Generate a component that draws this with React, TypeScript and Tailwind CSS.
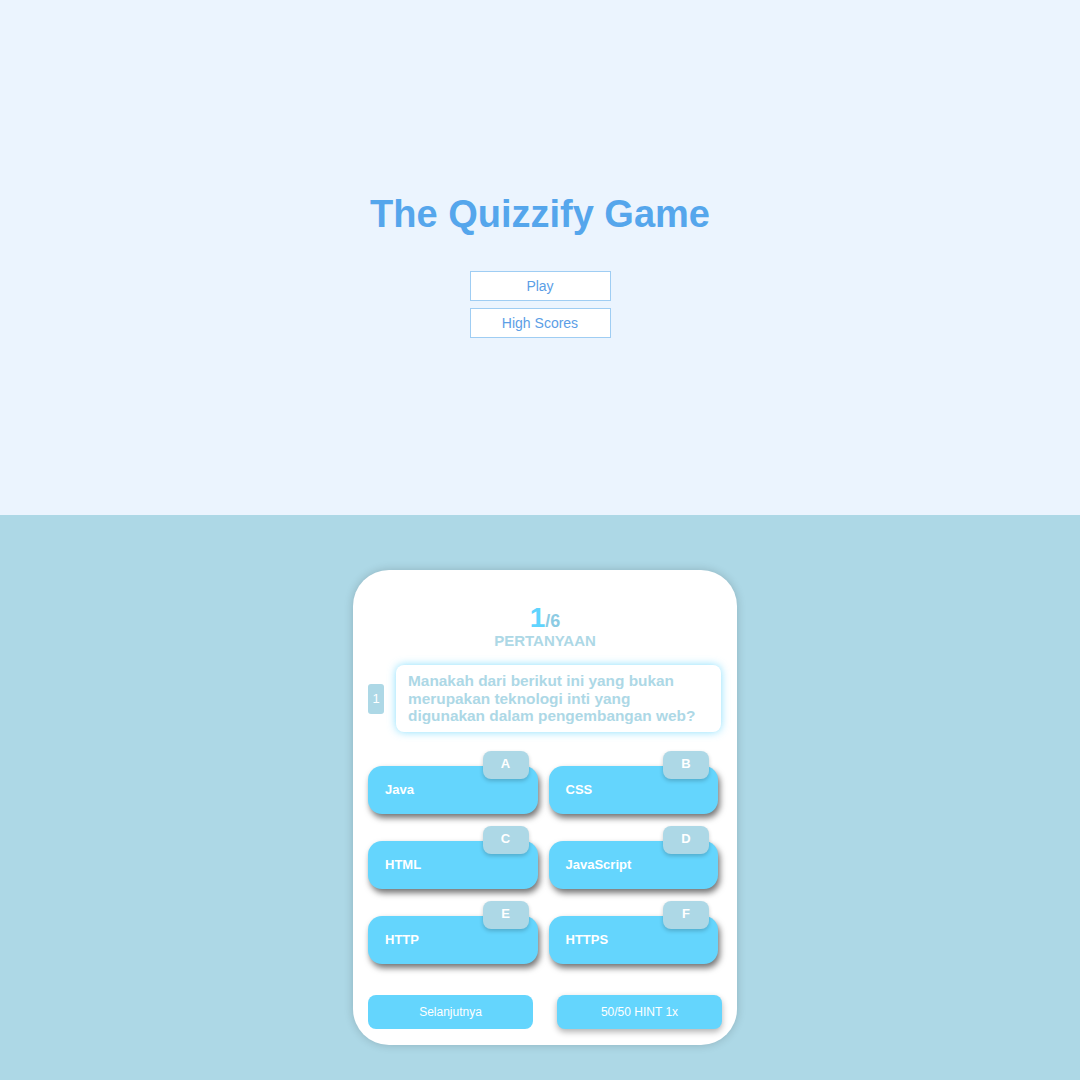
import React from 'react'

const ANSWERS = [
  { letter: 'A', text: 'Java' },
  { letter: 'B', text: 'CSS' },
  { letter: 'C', text: 'HTML' },
  { letter: 'D', text: 'JavaScript' },
  { letter: 'E', text: 'HTTP' },
  { letter: 'F', text: 'HTTPS' },
]

function Home() {
  return (
    <section className="h-[515px] bg-[#ebf4fe] flex flex-col items-center pt-[193px]">
      <h1 className="text-[38px] leading-[42px] font-bold text-[#55a6ec]">The Quizzify Game</h1>
      <div className="mt-[36px] flex flex-col gap-[7px]">
        <button className="w-[141px] h-[30px] bg-white border border-[#9fcdf3] text-[14px] text-[#5b9ee6]">
          Play
        </button>
        <button className="w-[141px] h-[30px] bg-white border border-[#9fcdf3] text-[14px] text-[#5b9ee6]">
          High Scores
        </button>
      </div>
    </section>
  )
}

function Quiz() {
  return (
    <section className="h-[565px] bg-[#add8e6] flex justify-center pt-[55px] pl-[10px]">
      <div className="w-[384px] h-[475px] bg-white rounded-[36px] shadow-[0_0_10px_rgba(0,0,0,0.18)] px-[15px] pt-[34px]">
        {/* counter */}
        <div className="flex flex-col items-center">
          <div className="flex items-baseline font-bold leading-none">
            <span className="text-[28px] text-[#5fd4fe]">1</span>
            <span className="text-[18px] text-[#8ccbe3]">/6</span>
          </div>
          <div className="mt-0 text-[15px] leading-[18px] font-bold text-[#add8e6]">PERTANYAAN</div>
        </div>

        {/* question */}
        <div className="mt-[15px] flex items-center gap-[12px]">
          <div className="w-[16px] h-[30px] rounded-[3px] bg-[#add8e6] text-white text-[13px] flex items-center justify-center">
            1
          </div>
          <div className="w-[325px] h-[67px] rounded-[8px] bg-white shadow-[0_0_8px_rgba(95,212,254,0.75)] pl-[12px] pr-[16px] pt-[7px] text-[15.4px] leading-[17.5px] font-bold text-[#add8e6]">
            Manakah dari berikut ini yang bukan merupakan teknologi inti yang digunakan dalam pengembangan web?
          </div>
        </div>

        {/* answers */}
        <div className="mt-[34px] grid grid-cols-2 gap-x-[11px] gap-y-[27px] pr-[4px]">
          {ANSWERS.map((a) => (
            <div
              key={a.letter}
              className="relative h-[48px] rounded-[14px] bg-[#64d5fd] shadow-[2px_4px_6px_rgba(0,0,0,0.55)] flex items-center pl-[17px] text-[13px] font-bold text-white"
            >
              {a.text}
              <div className="absolute right-[9px] top-[-15px] w-[46px] h-[28px] rounded-[8px] bg-[#add8e6] shadow-[0_2px_4px_rgba(0,0,0,0.2)] flex items-center justify-center pb-[2px] text-[13px] font-bold text-white">
                {a.letter}
              </div>
            </div>
          ))}
        </div>

        {/* actions */}
        <div className="mt-[31px] flex justify-between">
          <button className="w-[165px] h-[34px] rounded-[8px] bg-[#64d5fd] text-[12px] text-white">
            Selanjutnya
          </button>
          <button className="w-[165px] h-[34px] rounded-[8px] bg-[#64d5fd] shadow-[0_3px_6px_rgba(0,0,0,0.3)] text-[12px] text-white">
            50/50 HINT 1x
          </button>
        </div>
      </div>
    </section>
  )
}

export default function App() {
  return (
    <div className="font-['Liberation_Sans',Arial,sans-serif]">
      <Home />
      <Quiz />
    </div>
  )
}
